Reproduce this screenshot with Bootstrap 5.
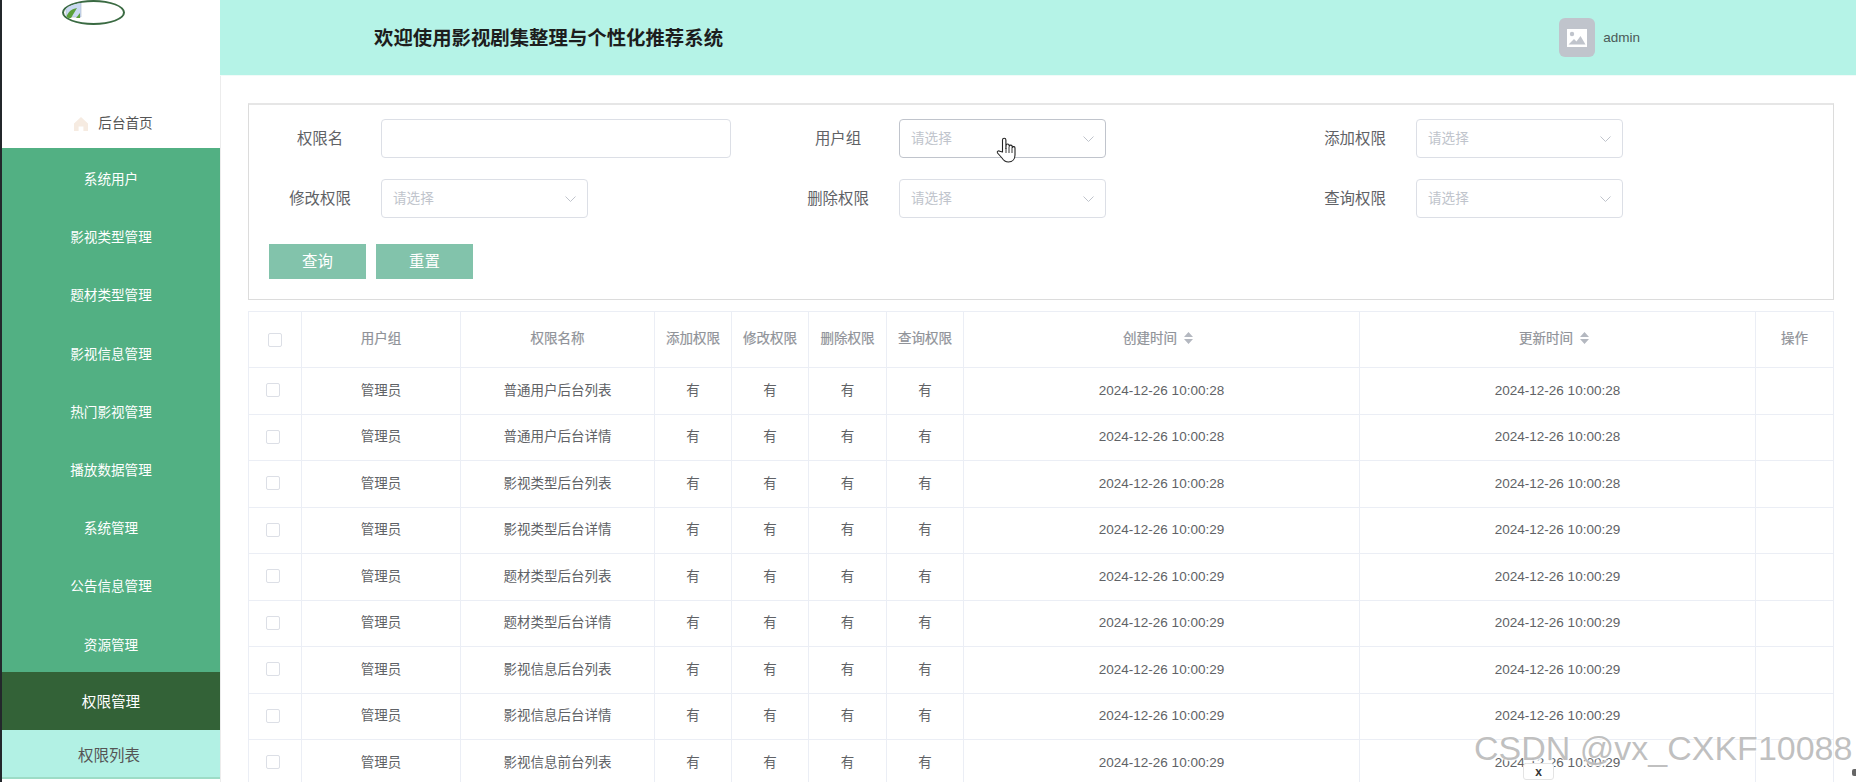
<!DOCTYPE html>
<html lang="zh-CN">
<head>
<meta charset="utf-8">
<title>权限管理</title>
<link href="https://cdn.jsdelivr.net/npm/bootstrap@5.3.0/dist/css/bootstrap.min.css" rel="stylesheet">
<style>
html,body{height:782px;overflow:hidden;background:#fff}
body{font-family:"Liberation Sans","Noto Sans CJK SC",sans-serif;font-size:13.5px;color:#606266;position:relative}
.shell{height:782px;border-left:2px solid #23272b}
.side{width:218px;flex:none;text-align:center}
.logo-area{height:148px}
.logo-ring{width:63px;height:25px;border:2px solid #3a6a42;border-radius:50%;margin:0 0 0 60px;padding-left:1px;overflow:hidden;background:#fff}
.home-link{margin-top:92px;height:13px;line-height:13px;gap:10px;padding-left:5px;color:#555;font-size:13.6px}
.menu-item{height:58.2px;line-height:63.5px;background:#52b083;color:#fff;font-size:13.6px}
.menu-item.on{background:#336237;font-size:14.6px;line-height:61px}
.menu-sub{height:49px;line-height:51px;padding-right:4px;background:#b2f1e4;border-bottom:2px solid #9ddcc6;color:#555;font-size:15.5px}
.content-col{min-width:0;border-left:1px solid #ececec;margin-left:0}
.topbar{height:76px;background:#b5f3e7;padding-left:154px;border-bottom:1px solid #f0fbf8;margin-left:-1px}
.topbar h1{font-size:19.4px;font-weight:700;color:#1d1d1d;margin:0;line-height:76px}
.user-wrap{margin-left:auto;margin-right:216px;gap:8px;color:#4b5a57}
.user-name{padding-top:2px}
.avatar{width:36px;height:39px;background:#c0c4cc;border-radius:6px}
.main{padding:27px 22px 0 27px}
.search-box{height:197px;border:1px solid #dcdcdc;border-top:2px solid #e6e6e6;padding:14px 0 0 12px}
.search-grid{display:grid;grid-template-columns:518px 517px 330px;row-gap:21px}
.field{display:flex;align-items:center;height:39px}
.field label{width:120px;padding-right:2px;text-align:center;font-size:15.4px;color:#606266;flex:none}
.fake-input{height:39px;width:350px;border:1px solid #dcdfe6;border-radius:4px;padding:0}
.fake-select{height:39px;width:207px;border:1px solid #dcdfe6;border-radius:4px;padding:1px 11px 0 11px;color:#c0c4cc;font-size:13.6px;background:#fff}
.fake-select.hover{border-color:#c0c4cc}
.btn-row{margin-top:26px;margin-left:8px;gap:10px}
.btn.act{width:97px;height:35px;padding:0;border:0;border-radius:0;background:#82c3ab;color:#fff;font-size:15.4px;line-height:33px;flex:none}
.data-table{table-layout:fixed;width:1585px;margin:11px 0 0 0;border-collapse:collapse;color:#606266;text-align:center}
.data-table td,.data-table th{border:1px solid #ebeef5;padding:0;vertical-align:middle;font-size:13.5px;background:#fff}
.data-table th{height:56px;font-weight:400;color:#909399;-webkit-text-stroke:.2px #909399}
.data-table td{height:46.5px}
.tick{display:inline-block;width:14px;height:14px;border:1px solid #dcdfe6;border-radius:2px;background:#fff;vertical-align:middle}
td .tick{margin:0 4px 2px 0}
.sort-ico{display:inline-block;margin:0 7px;vertical-align:-1px}
.col-a{width:53px}.col-b{width:159px}.col-c{width:194px}.col-e{width:77px}.col-f{width:78px}.col-t{width:396px}
.cursor-hand{position:absolute;left:996px;top:137px;width:20px;height:26px}
.wm{position:absolute;left:1474px;top:728px;font-size:34px;line-height:40px;white-space:nowrap;color:rgba(150,150,150,.6);text-shadow:0 0 2px #fff,1px 1px 1px rgba(255,255,255,.9)}
.close-x{position:absolute;left:1523px;top:763px;width:31px;height:17px;line-height:17px;text-align:center;background:#fff;border:1px solid #e4e4e4;border-radius:3px;font-size:12px;font-weight:700;color:#333}
.nub{position:absolute;right:0;top:769px;width:4px;height:7px;background:#666;border-radius:2px 0 0 2px}
</style>
</head>
<body>
<div class="shell d-flex">
  <aside class="side">
    <div class="logo-area">
      <div class="logo-ring">
        <svg width="17" height="17" viewBox="0 0 17 17" class="d-block"><path d="M1 6 10 1l6 0v14H1z" fill="#c9d9f2" stroke="#a9b6c6" stroke-width=".6"/><path d="M1 16c2-7 6-9 11-10l-6 10z" fill="#5aa03a"/><path d="M11 16l4-5v5z" fill="#5aa03a"/></svg>
      </div>
      <div class="home-link d-flex align-items-center justify-content-center">
        <svg width="14" height="14" viewBox="0 0 14 14"><path d="M7 0 0 6.500V14h4.600V9.500h4.800V14H14V6.500z" fill="#f6ebe1"/></svg>
        <span>后台首页</span>
      </div>
    </div>
    <div class="menu-item">系统用户</div>
    <div class="menu-item">影视类型管理</div>
    <div class="menu-item">题材类型管理</div>
    <div class="menu-item">影视信息管理</div>
    <div class="menu-item">热门影视管理</div>
    <div class="menu-item">播放数据管理</div>
    <div class="menu-item">系统管理</div>
    <div class="menu-item">公告信息管理</div>
    <div class="menu-item">资源管理</div>
    <div class="menu-item on">权限管理</div>
    <div class="menu-sub">权限列表</div>
  </aside>
  <div class="content-col flex-grow-1">
    <header class="topbar d-flex align-items-center">
      <h1>欢迎使用影视剧集整理与个性化推荐系统</h1>
      <div class="user-wrap d-flex align-items-center">
        <div class="avatar d-flex align-items-center justify-content-center">
          <svg width="20" height="18" viewBox="0 0 20 18"><path fill="#fff" d="M0 0h20v18H0z"/><circle cx="5" cy="5" r="2.200" fill="#c0c4cc"/><path fill="#c0c4cc" d="M1.500 15.500 7 10l2.500 2.500L13.500 7l5 8.500z"/></svg>
        </div>
        <span class="user-name">admin</span>
      </div>
    </header>
    <main class="main">
      <section class="search-box">
        <div class="search-grid">
          <div class="field"><label>权限名</label><input class="fake-input form-control" type="text"></div>
          <div class="field"><label>用户组</label><div class="fake-select hover d-flex align-items-center justify-content-between"><span>请选择</span><svg width="11" height="6" viewBox="0 0 11 6"><path d="M.5.5l5 5 5-5" fill="none" stroke="#c0c4cc"/></svg></div></div>
          <div class="field"><label>添加权限</label><div class="fake-select d-flex align-items-center justify-content-between"><span>请选择</span><svg width="11" height="6" viewBox="0 0 11 6"><path d="M.5.5l5 5 5-5" fill="none" stroke="#c0c4cc"/></svg></div></div>
          <div class="field"><label>修改权限</label><div class="fake-select d-flex align-items-center justify-content-between"><span>请选择</span><svg width="11" height="6" viewBox="0 0 11 6"><path d="M.5.5l5 5 5-5" fill="none" stroke="#c0c4cc"/></svg></div></div>
          <div class="field"><label>删除权限</label><div class="fake-select d-flex align-items-center justify-content-between"><span>请选择</span><svg width="11" height="6" viewBox="0 0 11 6"><path d="M.5.5l5 5 5-5" fill="none" stroke="#c0c4cc"/></svg></div></div>
          <div class="field"><label>查询权限</label><div class="fake-select d-flex align-items-center justify-content-between"><span>请选择</span><svg width="11" height="6" viewBox="0 0 11 6"><path d="M.5.5l5 5 5-5" fill="none" stroke="#c0c4cc"/></svg></div></div>
        </div>
        <div class="btn-row d-flex">
          <button class="btn act" type="button">查询</button>
          <button class="btn act" type="button">重置</button>
        </div>
      </section>
      <table class="data-table">
        <colgroup><col class="col-a"><col class="col-b"><col class="col-c"><col class="col-e"><col class="col-e"><col class="col-f"><col class="col-e"><col class="col-t"><col class="col-t"><col class="col-f"></colgroup>
        <thead>
          <tr>
            <th><span class="tick"></span></th><th>用户组</th><th>权限名称</th><th>添加权限</th><th>修改权限</th><th>删除权限</th><th>查询权限</th>
            <th>创建时间<svg class="sort-ico" width="9" height="12" viewBox="0 0 9 12"><path d="M4.500 0 9 5H0zM0 7h9l-4.500 5z" fill="#b4b8c0"/></svg></th>
            <th>更新时间<svg class="sort-ico" width="9" height="12" viewBox="0 0 9 12"><path d="M4.500 0 9 5H0zM0 7h9l-4.500 5z" fill="#b4b8c0"/></svg></th>
            <th>操作</th>
          </tr>
        </thead>
        <tbody>
          <tr><td><span class="tick"></span></td><td>管理员</td><td>普通用户后台列表</td><td>有</td><td>有</td><td>有</td><td>有</td><td>2024-12-26 10:00:28</td><td>2024-12-26 10:00:28</td><td></td></tr>
          <tr><td><span class="tick"></span></td><td>管理员</td><td>普通用户后台详情</td><td>有</td><td>有</td><td>有</td><td>有</td><td>2024-12-26 10:00:28</td><td>2024-12-26 10:00:28</td><td></td></tr>
          <tr><td><span class="tick"></span></td><td>管理员</td><td>影视类型后台列表</td><td>有</td><td>有</td><td>有</td><td>有</td><td>2024-12-26 10:00:28</td><td>2024-12-26 10:00:28</td><td></td></tr>
          <tr><td><span class="tick"></span></td><td>管理员</td><td>影视类型后台详情</td><td>有</td><td>有</td><td>有</td><td>有</td><td>2024-12-26 10:00:29</td><td>2024-12-26 10:00:29</td><td></td></tr>
          <tr><td><span class="tick"></span></td><td>管理员</td><td>题材类型后台列表</td><td>有</td><td>有</td><td>有</td><td>有</td><td>2024-12-26 10:00:29</td><td>2024-12-26 10:00:29</td><td></td></tr>
          <tr><td><span class="tick"></span></td><td>管理员</td><td>题材类型后台详情</td><td>有</td><td>有</td><td>有</td><td>有</td><td>2024-12-26 10:00:29</td><td>2024-12-26 10:00:29</td><td></td></tr>
          <tr><td><span class="tick"></span></td><td>管理员</td><td>影视信息后台列表</td><td>有</td><td>有</td><td>有</td><td>有</td><td>2024-12-26 10:00:29</td><td>2024-12-26 10:00:29</td><td></td></tr>
          <tr><td><span class="tick"></span></td><td>管理员</td><td>影视信息后台详情</td><td>有</td><td>有</td><td>有</td><td>有</td><td>2024-12-26 10:00:29</td><td>2024-12-26 10:00:29</td><td></td></tr>
          <tr><td><span class="tick"></span></td><td>管理员</td><td>影视信息前台列表</td><td>有</td><td>有</td><td>有</td><td>有</td><td>2024-12-26 10:00:29</td><td>2024-12-26 10:00:29</td><td></td></tr>
        </tbody>
      </table>
    </main>
  </div>
</div>
<svg class="cursor-hand" viewBox="0 0 20 26"><path d="M6.500 15V3a1.700 1.700 0 0 1 3.400 0v8.500l.2-3a1.500 1.500 0 0 1 3 0l.1 1a1.500 1.500 0 0 1 3 .2l.1.800a1.400 1.400 0 0 1 2.700.5V18c0 4-2.500 7-6.500 7-3.500 0-5-1.500-6.500-4L1.500 16c-.8-1.500 1-2.800 2.300-1.700z" fill="#fff" stroke="#222" stroke-width="1.100" stroke-linejoin="round"/><path d="M10 11v5M13 10v6M16 10.500V16" stroke="#222" fill="none" stroke-width=".9"/></svg>
<div class="wm">CSDN @vx_CXKF10088</div>
<div class="close-x">x</div>
<div class="nub"></div>
</body>
</html>
